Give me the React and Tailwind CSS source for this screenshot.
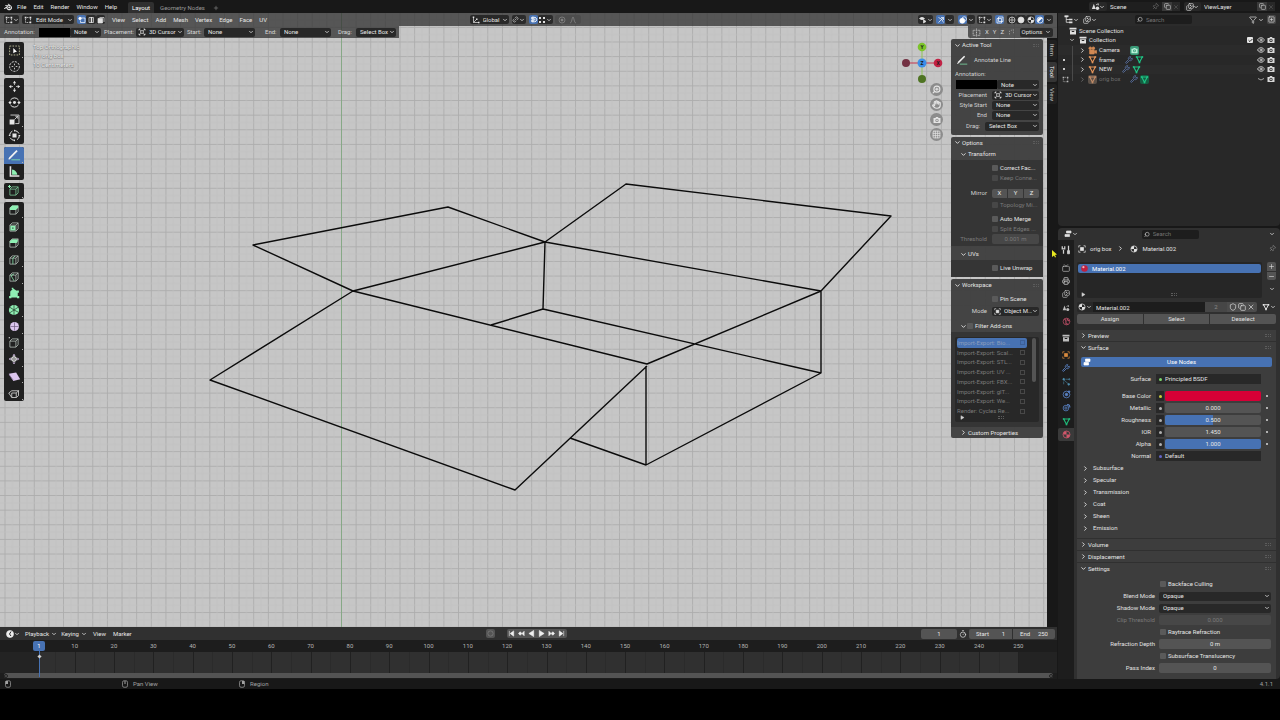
import React from 'react';
import clsx from 'clsx';
import { SiBlender } from 'react-icons/si';
import {
  Check, ChevronDown, ChevronRight, Copy, Eye, Funnel, Grid3x3, Hand, Images,
  Link2, Magnet, Minus, Pin, Plus, Printer, Search, Shield, SquarePlus, Timer, Tv, Wrench, X, ZoomIn,
} from 'lucide-react';

/* ---------- small shared icons ---------- */

const Svg = ({ size = 9, className, children }) => (
  <svg width={size} height={size} viewBox="0 0 16 16" fill="none" stroke="currentColor" strokeWidth="1.4" className={clsx('shrink-0', className)} aria-hidden="true">
    {children}
  </svg>
);

const Down = ({ className }) => <ChevronDown size={6} strokeWidth={3} className={clsx('shrink-0', className)} />;
const Right = ({ className }) => <ChevronRight size={7} strokeWidth={3} className={clsx('shrink-0', className)} />;

const MeshIcon = ({ className, size }) => (
  <Svg size={size} className={className}>
    <path d="M3 3.500h10L8 13z" strokeWidth="2" />
    <path d="M1.500 2h3v3h-3zM11.500 2h3v3h-3zM6.500 11.500h3v3h-3z" fill="currentColor" stroke="none" />
  </Svg>
);

const MaterialIcon = ({ className, size }) => (
  <Svg size={size} className={className}>
    <circle cx="8" cy="8" r="6.200" />
    <path d="M8 2a6 6 0 0 0-6 6h6zM8 8h6a6 6 0 0 1-6 6z" fill="currentColor" stroke="none" />
  </Svg>
);

const SceneIcon = ({ className, size }) => (
  <Svg size={size} className={className}>
    <path d="M5 3l3.500 9.500H1.500z" fill="currentColor" stroke="none" />
    <circle cx="11.500" cy="11" r="3" fill="currentColor" stroke="none" />
    <path d="M9 5l4-2v3" />
  </Svg>
);

const CollectionIcon = ({ className, size }) => (
  <Svg size={size} className={className}>
    <path d="M1 1.500h14v3.500H1z" fill="currentColor" stroke="none" />
    <path d="M2 6.500h12V15H2zM5.500 8v2h5V8z" fill="currentColor" fillRule="evenodd" stroke="none" />
  </Svg>
);

const CameraIcon = ({ className, size }) => (
  <Svg size={size} className={className}>
    <path d="M1 4h4l1-2h4l1 2h4v10H1zM8 5.500a3.300 3.300 0 1 0 0 6.600a3.300 3.300 0 1 0 0-6.600z" fill="currentColor" fillRule="evenodd" stroke="none" />
    <circle cx="8" cy="8.800" r="1.600" fill="currentColor" stroke="none" />
  </Svg>
);

const ObjectIcon = ({ className, size }) => (
  <Svg size={size} className={className}>
    <path d="M5 5h6v6H5z" fill="currentColor" />
    <path d="M1.500 5V1.500H5M11 1.500h3.500V5M14.500 11v3.500H11M5 14.500H1.500V11" />
  </Svg>
);

const EditIcon = ({ className, size }) => (
  <Svg size={size} className={className}>
    <path d="M3 6v7h8M13 5v5M6 3h4" strokeDasharray="3 1.500" />
    <path d="M1.500 1.500h3.500v3.500h-3.500zM11 1.500h3.500v3.500h-3.500zM11 11h3.500v3.500h-3.500z" fill="currentColor" stroke="none" />
  </Svg>
);

const CursorTargetIcon = ({ className, size }) => (
  <Svg size={size} className={className}>
    <circle cx="8" cy="8" r="3" />
    <path d="M2 2l3.500 3.500M14 2l-3.500 3.500M2 14l3.500-3.500M14 14l-3.500-3.500M2 2v3M2 2h3M14 2v3M14 2h-3M14 14v-3M14 14h-3M2 14v-3M2 14h3" />
  </Svg>
);

const AnnotateIcon = ({ size = 14 }) => (
  <Svg size={size}>
    <path d="M3 11.500L11.500 3" stroke="#f2f2f2" strokeWidth="2" />
    <path d="M2 13l1.500-2" stroke="#f2f2f2" />
    <path d="M5 13.500h10" stroke="#7fe0a8" strokeWidth="1" />
  </Svg>
);

/* ---------- form controls ---------- */

const Dropdown = ({ label, value, icon, className, inner = 'pl-[4px]' }) => (
  <span className={clsx('flex h-[9px] items-center rounded-xs bg-[#282828] pr-px text-[#e6e6e6]', className)}>
    {icon}
    <select aria-label={label} className={clsx('h-full min-w-0 flex-1 appearance-none bg-transparent outline-none', inner)}>
      <option>{value}</option>
    </select>
    <Down />
  </span>
);

const CheckBox = ({ label, dim, className }) => (
  <label className={clsx('flex items-center gap-[2px] whitespace-nowrap', dim ? 'text-[#7a7a7a]' : 'text-[#e6e6e6]', className)}>
    <input type="checkbox" disabled={dim} className={clsx('size-[6px] shrink-0 appearance-none rounded-[1px]', dim ? 'bg-[#474747]' : 'bg-[#5a5a5a]')} />
    {label}
  </label>
);

const NumberField = ({ label, value, fill = 0, dim }) => (
  <span className={clsx('grid h-[10px] min-w-0 flex-1 overflow-hidden rounded-xs', dim ? 'bg-[#474747] text-[#7a7a7a]' : 'bg-[#545454] text-[#e6e6e6]')}>
    <span className="col-start-1 row-start-1 bg-[#4772b3]" style={{ width: `${fill * 100}%` }} />
    <input aria-label={label} defaultValue={value} disabled={dim} className="col-start-1 row-start-1 w-full min-w-0 bg-transparent text-center outline-none" />
  </span>
);

const SearchBox = () => (
  <label className="flex h-[9px] w-[57px] items-center gap-[3px] rounded-xs bg-[#1d1d1d] pl-[2px]">
    <Search size={7} strokeWidth={2.5} className="-scale-x-100 text-[#cfcfcf]" />
    <input aria-label="Search" placeholder="Search" className="w-full min-w-0 bg-transparent outline-none placeholder:text-[#737373]" />
  </label>
);

const Grip = () => <span className="h-[3px] w-[6px] border-y border-dotted border-[#5c5c5c]" />;

/* ---------- top bar ---------- */

const DataSelector = ({ icon, name, pin }) => (
  <div className="flex h-[9px] w-[91px] items-center rounded-xs bg-[#1f1f1f]">
    <button aria-label={`Browse ${name}`} className="flex h-full items-center rounded-xs bg-[#282828] px-[2px] text-[#dcdcdc]">{icon}<Down className="-ml-px" /></button>
    <input aria-label="Name" defaultValue={name} className="w-0 flex-1 bg-transparent pl-[3px] text-[#e6e6e6] outline-none" />
    {pin && <Pin size={7} className="mr-[3px] rotate-45 text-[#777]" />}
    <button aria-label={`New ${name}`} className="flex h-full w-[10px] items-center justify-center bg-[#3a3a3a] text-[#d0d0d0]"><Copy size={7} /></button>
    <button aria-label={`Remove ${name}`} className="flex h-full w-[8px] items-center justify-center bg-[#282828] text-[#6b6b6b]"><X size={6} /></button>
  </div>
);

const TopBar = () => (
  <header className="flex h-[13px] items-center bg-[#181818] pr-[5px] text-[#e6e6e6]">
    <SiBlender size={8} className="ml-[4px]" />
    <nav className="ml-[5px] flex gap-[7px]">
      {['File', 'Edit', 'Render', 'Window', 'Help'].map((m) => <button key={m}>{m}</button>)}
    </nav>
    <nav className="ml-[11px] flex h-full items-end">
      <button className="h-[11px] rounded-t-xs bg-[#303030] px-[4px] text-white">Layout</button>
      <button className="h-[11px] px-[6px] text-[#989898]">Geometry Nodes</button>
      <button className="h-[11px] px-[2px] text-[#989898]" aria-label="Add workspace"><Plus size={6} /></button>
    </nav>
    <div className="ml-auto flex gap-[4px]">
      <DataSelector icon={<SceneIcon />} name="Scene" pin />
      <DataSelector icon={<Images size={8} />} name="ViewLayer" />
    </div>
  </header>
);

/* ---------- 3D viewport ---------- */

const WIRES = [
  'M253 245L448 207L545 242L353 291Z',
  'M545 242L626 184L891 216L821 291Z',
  'M545 242L543 309L821 373',
  'M543 309L491 325',
  'M353 291L647 364L821 291V373L646 465V366',
  'M646 465L570 438',
  'M353 291L210 380L515 490L647 366',
];

const Canvas = () => (
  <svg className="absolute inset-0 h-full w-full bg-[#c6c6c6]" aria-hidden="true">
    <defs>
      <pattern id="grid" width="14.63" height="14.63" patternUnits="userSpaceOnUse" x="341" y="41.5">
        <path d="M0.500 0V14.630M0 0.500H14.630" stroke="#acadac" strokeWidth="0.900" />
        <path d="M7.800 0V14.630M0 7.800H14.630" stroke="#c1c2c1" strokeWidth="0.700" />
      </pattern>
    </defs>
    <g transform="translate(0 -13)">
      <rect width="100%" height="200%" fill="url(#grid)" />
      <path d="M341.500 0V2000" stroke="#86a886" strokeWidth="1" />
      <path d={WIRES.join('')} fill="none" stroke="#0b0b0b" strokeWidth="1.400" strokeLinejoin="round" />
    </g>
  </svg>
);

const HeadButton = ({ label, on, className, children }) => (
  <button aria-label={label} className={clsx('flex h-[9px] items-center justify-center rounded-xs', on ? 'bg-[#4772b3] text-white' : 'bg-[#2b2b2b] text-[#e0e0e0]', className)}>
    {children}
  </button>
);

const ViewportHeader = () => (
  <div className="flex h-[13px] items-center bg-[#303030]/75 px-[4px] text-[#e8e8e8]">
    <HeadButton label="Editor type" className="w-[15px]"><EditIcon size={8} /><Down /></HeadButton>
    <Dropdown label="Mode" value="Edit Mode" icon={<EditIcon size={8} className="ml-[2px]" />} className="ml-[3px] w-[52px]" />
    <div className="ml-[3px] flex">
      <HeadButton label="Vertex select" on className="w-[9px]"><Svg size={8}><path d="M4 4h10v9H5V9" /><circle cx="4" cy="5" r="2.500" fill="white" /></Svg></HeadButton>
      <HeadButton label="Edge select" className="w-[10px]"><Svg size={8}><path d="M4 3h9v10H4z" /><path d="M9 2v12" strokeWidth="3" /></Svg></HeadButton>
      <HeadButton label="Face select" className="w-[9px]"><Svg size={8}><path d="M5 3h9v9" /><path d="M2 5h9v9H2z" fill="currentColor" /></Svg></HeadButton>
    </div>
    <nav className="ml-[7px] flex gap-[7px]">
      {['View', 'Select', 'Add', 'Mesh', 'Vertex', 'Edge', 'Face', 'UV'].map((m) => <button key={m}>{m}</button>)}
    </nav>
    <div className="grow-3" />
    <Dropdown label="Orientation" value="Global" inner="pl-[3px]" icon={<Svg size={8} className="ml-[2px]"><path d="M3 2v11h11M3 13l6-6" /><path d="M1.500 1h3v3h-3zM12 11.500h3v3h-3zM8 5h3v3H8z" fill="currentColor" stroke="none" /></Svg>} className="w-[39px]" />
    <HeadButton label="Pivot point" className="ml-[3px] w-[14px]"><Link2 size={7} className="-rotate-45" /><Down /></HeadButton>
    <HeadButton label="Snap" on className="ml-[3px] w-[9px]"><Magnet size={7} strokeWidth={3} className="rotate-45" /></HeadButton>
    <HeadButton label="Snap to" className="w-[15px]"><Svg size={8}><path d="M2 2h4v4H2zM10 2h4v4h-4zM2 10h4v4H2zM10 10h4v4h-4z" fill="currentColor" stroke="none" /></Svg><Down /></HeadButton>
    <div className="ml-[2px] flex h-[9px] w-[26px] items-center gap-[3px] rounded-xs bg-[#4d4d4d] px-[3px] text-[#8a8a8a]">
      <Svg size={8}><circle cx="8" cy="8" r="6" /><circle cx="8" cy="8" r="2" fill="currentColor" /></Svg>
      <Svg size={8}><path d="M2 14c4 0 4-12 6-12s2 12 6 12" /></Svg>
    </div>
    <div className="grow-5" />
    <HeadButton label="Visibility" className="w-[15px]"><Svg size={8}><path d="M1 5q5-5 10 0q-5 5-10 0z" fill="currentColor" /><path d="M9 7v7l5-3z" fill="currentColor" /></Svg><Down /></HeadButton>
    <HeadButton label="Gizmos" on className="ml-[3px] w-[9px]"><Svg size={8}><path d="M3 13L13 3M8 3h5v5M3 3q8 2 10 10" /></Svg></HeadButton>
    <HeadButton label="Gizmo options" className="w-[9px]"><Down /></HeadButton>
    <HeadButton label="Overlays" on className="ml-[4px] w-[9px]"><Svg size={8}><circle cx="6.500" cy="9.500" r="5" fill="white" /><circle cx="10.500" cy="6" r="4.500" /></Svg></HeadButton>
    <HeadButton label="Overlay options" className="w-[8px]"><Down /></HeadButton>
    <HeadButton label="Mesh edit mode" className="ml-[2px] w-[15px]"><EditIcon size={8} /><Down /></HeadButton>
    <HeadButton label="X-ray" on className="ml-[3px] w-[9px]"><Svg size={8}><path d="M2 5h9v9H2zM5 2h9v9H5z" /></Svg></HeadButton>
    <div className="ml-[3px] flex">
      <HeadButton label="Wireframe" className="w-[9px]"><Svg size={8}><circle cx="8" cy="8" r="6" /><path d="M2 8h12M8 2v12" /></Svg></HeadButton>
      <HeadButton label="Solid" className="w-[10px]"><Svg size={8}><circle cx="8" cy="8" r="6" fill="currentColor" /></Svg></HeadButton>
      <HeadButton label="Material preview" className="w-[9px]"><MaterialIcon size={8} /></HeadButton>
      <HeadButton label="Rendered" on className="w-[9px]"><Svg size={8}><circle cx="8" cy="8" r="6" /><path d="M4 12a6 6 0 0 1 8-8z" fill="currentColor" /></Svg></HeadButton>
      <HeadButton label="Shading options" className="w-[9px]"><Down /></HeadButton>
    </div>
  </div>
);

const ToolSettings = () => (
  <div className="flex items-start justify-between text-[#d6d6d6]">
    <div className="flex h-[12px] items-center bg-[#303030]/75 pr-[3px] pl-[4px]">
      <span className="w-[35px]">Annotation:</span>
      <span className="h-[9px] w-[31px] bg-black" />
      <Dropdown label="Annotation layer" value="Note" className="w-[31px]" />
      <span className="ml-[3px] w-[32px]">Placement:</span>
      <Dropdown label="Annotation placement" value="3D Cursor" icon={<CursorTargetIcon size={8} className="ml-[2px]" />} inner="pl-[3px]" className="w-[48px]" />
      <span className="ml-[3px] w-[17px]">Start:</span>
      <Dropdown label="Start" value="None" className="w-[51px]" />
      <span className="ml-[10px] w-[15px]">End:</span>
      <Dropdown label="End" value="None" className="w-[51px]" />
      <span className="ml-[7px] w-[18px]">Drag:</span>
      <Dropdown label="Drag action" value="Select Box" className="w-[40px]" />
    </div>
    <div className="flex h-[12px] items-center gap-[4px] rounded-bl-xs bg-[#303030]/75 pr-[4px] pl-[4px]">
      <Svg size={9}><path d="M8 1v14M6 4H2v9h4M10 4h4v9h-4" strokeDasharray="2 1" /></Svg>
      <button>X</button>
      <button>Y</button>
      <button>Z</button>
      <Svg size={8} className="opacity-60"><path d="M3 13V6l8-3v8" strokeDasharray="3 2" /></Svg>
      <HeadButton label="Options menu" className="w-[33px] gap-[3px]">Options<Down /></HeadButton>
    </div>
  </div>
);

const Cube = ({ children, className }) => (
  <Svg size={12} className={className || 'text-[#b9c4bd]'}>
    <path d="M2.500 5.500h8v8h-8zM2.500 5.500l3-3h8l-3 3M13.500 2.500v8l-3 3" strokeWidth="1" />
    {children}
  </Svg>
);

const G = '#8ff0b4';
const P = '#dcc6ee';

const TOOL_GROUPS = [
  {
    size: 'h-[33px]',
    tools: [
      ['Select Box', <Svg size={13}><path d="M2 2.500h12v11H2z" strokeDasharray="2 1.500" stroke="#cfcfa8" strokeWidth="1" /><path d="M6.500 5v6.500l2-1.500 2.500-.5z" fill="white" stroke="none" /></Svg>, true],
      ['Cursor', <Svg size={13}><circle cx="8" cy="8" r="6" strokeDasharray="2.500 1.500" strokeWidth="1.200" /><path d="M8 4.500v2M8 9.500v2M4.500 8h2M9.500 8h2" strokeWidth="1" /></Svg>],
    ],
  },
  {
    size: 'h-[66px]',
    tools: [
      ['Move', <Svg size={13}><path d="M8 1l2 3H6zM8 15l2-3H6zM1 8l3-2v4zM15 8l-3-2v4z" fill="currentColor" stroke="none" /><path d="M8 4v2M8 10v2M4 8h2M10 8h2" strokeWidth="1" /></Svg>],
      ['Rotate', <Svg size={13}><path d="M3 5a6 6 0 0 1 10 0M3 11a6 6 0 0 0 10 0" strokeWidth="1.200" /><circle cx="8" cy="8" r="1.800" fill="currentColor" stroke="none" /><path d="M0.500 8l2-2 2 2-2 2zM11.500 8l2-2 2 2-2 2z" fill="currentColor" stroke="none" /></Svg>],
      ['Scale', <Svg size={13}><path d="M3 2.500h10.500V13H9" strokeWidth="1" /><path d="M2 8h6v6H2z" fill="currentColor" stroke="none" /><path d="M8 8l4-4M9 4h3v3" strokeWidth="1" /></Svg>, true],
      ['Transform', <Svg size={13}><circle cx="8" cy="8" r="6" strokeDasharray="6 3.400" strokeWidth="1.200" /><path d="M5.500 5.500h5v5h-5z" fill="currentColor" stroke="none" /><path d="M8 1v2M8 13v2M1 8h2M13 8h2" strokeWidth="1.200" /></Svg>],
    ],
  },
  {
    size: 'h-[33px]',
    tools: [
      ['Annotate', <AnnotateIcon />, true, true],
      ['Measure', <Svg size={13}><path d="M3 1.500v12h11" strokeWidth="2" /><path d="M5 5.500a8 8 0 0 1 6.500 6.500H5z" fill={G} stroke="none" /></Svg>],
    ],
  },
  { size: 'h-[16px]', tools: [['Add Cube', <Cube className="text-[#7fcf9d]"><path d="M2 0v4M0 2h4" stroke={G} /></Cube>, true]] },
  {
    size: 'h-[199px]',
    tools: [
      ['Extrude Region', <Cube><path d="M2.500 8V5l3-3h8v3l-3 3z" fill={G} stroke="none" /></Cube>, true],
      ['Inset Faces', <Cube><path d="M4.500 7.500h4v4h-4z" stroke={G} strokeWidth="2.600" /></Cube>],
      ['Bevel', <Cube><path d="M2.500 8V6l3-3h6l2 2-2 3z" fill={G} stroke="none" /></Cube>],
      ['Loop Cut', <Cube><path d="M6.500 13.500v-8l3-3" stroke={G} strokeWidth="1" /></Cube>, true],
      ['Knife', <Cube><path d="M4 6l4 7M8 4L4 6" stroke={G} strokeWidth="1" /></Cube>, true],
      ['Poly Build', <Svg size={12}><path d="M3 6l4-4 6 4v8H3z" fill={G} stroke="none" /><path d="M1.500 12h3v3h-3zM12 12h3v3h-3zM11.500 4.500h3v3h-3zM5 1h2v2H5z" fill={G} stroke="none" /></Svg>],
      ['Spin', <Svg size={12}><circle cx="8" cy="8" r="6.800" fill={G} stroke="none" /><path d="M8 8V1M8 8l6-4M8 8l6 3M8 8v7M8 8l-6 4M8 8L2 4" stroke="#28402f" strokeWidth="1" /></Svg>, true],
      ['Smooth', <Svg size={11}><circle cx="8" cy="8" r="6.500" fill={P} stroke="none" /><path d="M2 8h12M8 2v12" stroke="#6d5a7d" strokeWidth="1" /></Svg>, true],
      ['Edge Slide', <Cube><path d="M1 1h1.500" stroke="white" /></Cube>, true],
      ['Shrink/Fatten', <Svg size={12}><path d="M8 1l2 2.500H6zM8 15l2-2.500H6zM1 8l2.500-2v4zM15 8l-2.500-2v4z" fill={P} stroke="none" /><circle cx="8" cy="8" r="3" /><path d="M8 4v8M4 8h8" strokeWidth="1" /></Svg>, true],
      ['Shear', <Svg size={13}><path d="M1 4.500L10 3l5 8.500-8.500 2z" fill={P} stroke="none" /><path d="M1.500 6l5 6.500" stroke="#8e76a3" strokeWidth="1" /></Svg>, true],
      ['Rip Region', <Svg size={12}><path d="M1 8l4-3h9l-3 3v6H5zM14 4.500v7l-3 2.500M5 14V8h6" strokeWidth="1" /></Svg>, true],
    ],
  },
];

const Toolbar = () => (
  <div className="mt-[4px] ml-[4px] flex w-[20px] flex-col gap-[3px] text-[#e6e6e6]">
    {TOOL_GROUPS.map((group, i) => (
      <div key={i} className={clsx('flex shrink-0 flex-col overflow-hidden rounded-xs bg-[#202020]', group.size)}>
        {group.tools.map(([name, icon, more, active]) => (
          <button key={name} aria-label={name} className={clsx('relative flex min-h-0 flex-1 items-center justify-center', active && 'bg-[#4772b3]')}>
            {icon}
            {more && <span className="absolute right-px bottom-px size-px bg-[#b0b0b0]" />}
          </button>
        ))}
      </div>
    ))}
  </div>
);

const Gizmo = () => (
  <svg width="42" height="44" viewBox="0 0 42 44" className="block">
    <path d="M5 22h32" stroke="#c4354f" strokeWidth="1" />
    <path d="M21 6v32" stroke="#8fc45a" strokeWidth="1" />
    <circle cx="21" cy="6" r="4.300" fill="#7cc32a" />
    <circle cx="21" cy="38" r="4" fill="#4f7423" />
    <circle cx="5" cy="22" r="4" fill="#733243" />
    <circle cx="37" cy="22" r="4.300" fill="#c22245" />
    <circle cx="21" cy="22" r="4.500" fill="#3b8fe8" />
    <g fill="#1a1a1a" fontSize="5" fontWeight="bold" textAnchor="middle">
      <text x="21" y="8">Y</text>
      <text x="21" y="24">Z</text>
      <text x="37" y="24">X</text>
    </g>
  </svg>
);

const NAV_BUTTONS = [
  ['Zoom', <ZoomIn size={9} strokeWidth={3} className="-scale-x-100" />],
  ['Pan', <Hand size={9} strokeWidth={3} />],
  ['Camera view', <CameraIcon size={8} />],
  ['Orthographic', <Grid3x3 size={9} strokeWidth={2} />],
];

/* ---------- sidebar panels inside the viewport ---------- */

const PanelTitle = ({ title, closed, sub, height = 'h-[12px]', className, children }) => (
  <div className={clsx('flex items-center text-[#e6e6e6]', height, sub ? 'pl-[9px]' : 'pl-[3px]', className)}>
    {closed ? <Right /> : <ChevronDown size={7} strokeWidth={3} className="shrink-0" />}
    {children}
    <span className="ml-px grow">{title}</span>
    {!sub && <Grip />}
  </div>
);

const SideRow = ({ label, wide, className, children }) => (
  <div className={clsx('flex h-[10px] items-center gap-[5px]', className)}>
    <span className={clsx('shrink-0 text-right text-[#d0d0d0]', wide ? 'w-[29px]' : 'w-[36px]')}>{label}</span>
    {children}
  </div>
);

const ActiveToolPanel = () => (
  <section className="rounded-xs bg-[#3d3d3d]/95 pr-[4px] pb-[4px]">
    <PanelTitle title="Active Tool" />
    <div className="mt-[2px] flex h-[14px] items-center gap-[6px] pl-[5px] text-[#d0d0d0]"><AnnotateIcon size={12} />Annotate Line</div>
    <div className="mt-[2px] h-[10px] pl-[4px] leading-[10px] text-[#d0d0d0]">Annotation:</div>
    <div className="flex h-[11px] items-center pl-[5px]">
      <span className="h-[9px] w-[41px] bg-black" />
      <Dropdown label="Layer" value="Note" className="flex-1" />
    </div>
    <SideRow label="Placement"><Dropdown label="Placement" value="3D Cursor" icon={<CursorTargetIcon size={8} className="ml-[2px]" />} inner="pl-[3px]" className="min-w-0 flex-1" /></SideRow>
    <SideRow label="Style Start"><Dropdown label="Style Start" value="None" className="min-w-0 flex-1" /></SideRow>
    <SideRow label="End"><Dropdown label="Style End" value="None" className="min-w-0 flex-1" /></SideRow>
    <SideRow label="Drag:" wide className="mt-px"><Dropdown label="Drag" value="Select Box" className="min-w-0 flex-1" /></SideRow>
  </section>
);

const OptionsPanel = () => (
  <section className="rounded-xs bg-[#3d3d3d]/95">
    <PanelTitle title="Options" height="h-[11px]" className="pr-[4px]" />
    <PanelTitle title="Transform" sub />
    <div className="bg-[#353535] py-[2px] pr-[4px]">
      <CheckBox label="Correct Fac..." className="mt-px ml-[41px] h-[10px]" />
      <CheckBox label="Keep Conne..." dim className="ml-[41px] h-[10px]" />
      <div className="mt-[5px] flex h-[10px] items-center gap-[5px]">
        <span className="w-[36px] text-right text-[#d0d0d0]">Mirror</span>
        <div className="flex h-[9px] flex-1 gap-px overflow-hidden rounded-xs text-[#e6e6e6]">
          {['X', 'Y', 'Z'].map((axis) => <button key={axis} className="flex-1 bg-[#545454]">{axis}</button>)}
        </div>
      </div>
      <CheckBox label="Topology Mi..." dim className="mt-[2px] ml-[41px] h-[10px]" />
      <CheckBox label="Auto Merge" className="mt-[4px] ml-[41px] h-[10px]" />
      <CheckBox label="Split Edges ..." dim className="ml-[41px] h-[10px]" />
      <div className="flex h-[10px] items-center gap-[5px]">
        <span className="w-[36px] text-right text-[#7a7a7a]">Threshold</span>
        <NumberField label="Threshold" value="0.001 m" dim />
      </div>
    </div>
    <PanelTitle title="UVs" sub className="mt-[2px]" />
    <div className="bg-[#353535] pt-[3px] pb-[4px]">
      <CheckBox label="Live Unwrap" className="ml-[41px] h-[10px]" />
    </div>
  </section>
);

const ADDONS = [
  'Import-Export: Bio...', 'Import-Export: Scal...', 'Import-Export: STL...', 'Import-Export: UV ...',
  'Import-Export: FBX...', 'Import-Export: glT...', 'Import-Export: We...', 'Render: Cycles Re...',
];

const WorkspacePanel = () => (
  <section className="rounded-xs bg-[#3d3d3d]/95">
    <PanelTitle title="Workspace" className="pr-[4px]" />
    <div className="pr-[4px]">
      <CheckBox label="Pin Scene" className="mt-[3px] ml-[41px] h-[10px]" />
      <div className="mt-[2px]">
        <SideRow label="Mode"><Dropdown label="Workspace mode" value="Object M..." icon={<ObjectIcon size={7} className="ml-[2px]" />} inner="pl-[3px]" className="min-w-0 flex-1" /></SideRow>
      </div>
    </div>
    <PanelTitle title="Filter Add-ons" sub className="mt-[4px]">
      <input type="checkbox" aria-label="Filter Add-ons" className="mr-px size-[6px] appearance-none rounded-[1px] bg-[#5a5a5a]" />
    </PanelTitle>
    <div className="bg-[#353535] px-[4px] pt-[5px] pb-[5px]">
      <div className="flex h-[85px] flex-col rounded-xs bg-[#282828] p-px text-[#7a7a7a]">
        <div className="flex min-h-0 flex-1 justify-between">
          <ul className="ml-px flex h-[78px] w-[70px] flex-col">
            {ADDONS.map((name, i) => (
              <li key={name} className={clsx('flex min-h-0 flex-1 items-center justify-between whitespace-nowrap pr-[2px]', i === 0 && 'rounded-xs bg-[#4772b3] text-[#8c9dbb]')}>
                {name}
                <input type="checkbox" disabled aria-label={name} className={clsx('size-[5px] appearance-none border', i === 0 ? 'border-[#3d619a]' : 'border-[#484848]')} />
              </li>
            ))}
          </ul>
          <span className="mr-[2px] h-[44px] w-[4px] rounded-full bg-[#545454]" />
        </div>
        <div className="flex h-[7px] items-center pr-[34px] pl-[4px]">
          <Svg size={5} className="text-[#d0d0d0]"><path d="M3 2l10 6-10 6z" fill="currentColor" /></Svg>
          <span className="grow" />
          <Grip />
        </div>
      </div>
    </div>
    <PanelTitle title="Custom Properties" sub closed height="h-[11px]" />
  </section>
);

const Viewport = () => (
  <section className="relative flex flex-1 flex-col">
    <Canvas />
    <div className="relative flex flex-1 flex-col">
      <ViewportHeader />
      <ToolSettings />
      <div className="flex flex-1">
        <Toolbar />
        <div className="mt-[4px] ml-[9px] leading-[9px] text-[#f2f2f2] [text-shadow:0_0_1px_#555,0_1px_1px_#888]">
          <p>Top Orthographic</p>
          <p>(1) orig box</p>
          <p>10 Centimeters</p>
        </div>
        <div className="mt-[3px] mr-[8px] ml-auto flex w-[42px] flex-col items-end">
          <Gizmo />
          <div className="mt-[-2px] flex flex-col gap-[2px]">
            {NAV_BUTTONS.map(([name, icon]) => (
              <button key={name} aria-label={name} className="flex size-[13px] items-center justify-center rounded-full bg-[#8c8c8c] text-[#e4e4e4]">{icon}</button>
            ))}
          </div>
        </div>
        <div className="mt-px mr-[4px] flex w-[92px] flex-col gap-[2px]">
          <ActiveToolPanel />
          <OptionsPanel />
          <WorkspacePanel />
        </div>
        <nav className="flex w-[10px] flex-col gap-[2px] bg-[#181818] pt-[2px] text-[#c6c6c6]">
          {['Item', 'Tool', 'View'].map((tab) => (
            <button key={tab} className={clsx('flex h-[20px] items-center justify-center rounded-r-xs [writing-mode:vertical-rl]', tab === 'Tool' ? 'bg-[#353535] text-white' : 'bg-[#202020]')}>{tab}</button>
          ))}
        </nav>
      </div>
    </div>
    {/* mouse pointer */}
    <svg width="5" height="8" viewBox="0 0 5 8" className="absolute top-[237px] right-0"><path d="M0 0v7l2-1.500 1 2 1-.5-1-2 2-.5z" fill="#e8e820" /></svg>
  </section>
);

/* ---------- timeline ---------- */

const FRAMES = Array.from({ length: 25 }, (_, i) => (i + 1) * 10);

const PLAYBACK = [
  ['Jump to start', 'M3 2v12M13 2v12L5 8z'],
  ['Previous keyframe', 'M1 8l4-4 4 4-4 4zM14 3v10L9 8z'],
  ['Play reverse', 'M13 1v14L2 8z'],
  ['Play', 'M3 1v14l11-7z'],
  ['Next keyframe', 'M15 8l-4-4-4 4 4 4zM2 3v10l5-5z'],
  ['Jump to end', 'M13 2v12M3 2v12l8-6z'],
];

const Timeline = () => (
  <section className="relative bg-[#1d1d1d] text-[#e6e6e6]">
    <div className="flex h-[13px] items-center justify-between bg-[#303030] pr-[2px] pl-[6px]">
      <div className="flex items-center">
        <button aria-label="Timeline editor" className="flex items-center"><Svg size={8}><circle cx="8" cy="8" r="7" fill="#eee" /><path d="M10 3L7 8l3 4" stroke="#222" strokeWidth="2" /></Svg><Down /></button>
        <button className="ml-[5px] flex items-center gap-[2px]">Playback<Down /></button>
        <button className="ml-[4px] flex items-center gap-[2px]">Keying<Down /></button>
        <button className="ml-[6px]">View</button>
        <button className="ml-[7px]">Marker</button>
      </div>
      <div className="flex items-center">
        <button aria-label="Auto keying" className="flex size-[9px] items-center justify-center rounded-xs bg-[#545454] text-[#888]"><Svg size={7}><circle cx="8" cy="8" r="6" /></Svg></button>
        <div className="ml-[12px] flex h-[9px] overflow-hidden rounded-xs bg-[#545454]">
          {PLAYBACK.map(([name, d]) => (
            <button key={name} aria-label={name} className="flex w-[10px] items-center justify-center text-[#f0f0f0]"><Svg size={7}><path d={d} fill="currentColor" /></Svg></button>
          ))}
        </div>
      </div>
      <div className="flex h-[10px] items-center">
        <span className="flex w-[36px]"><NumberField label="Current frame" value="1" /></span>
        <Timer size={8} className="mx-[2px]" />
        <label className="flex h-full w-[43px] items-center rounded-l-xs bg-[#545454] px-[7px]">Start<input defaultValue="1" className="w-0 flex-1 bg-transparent text-right outline-none" /></label>
        <label className="ml-px flex h-full w-[42px] items-center rounded-r-xs bg-[#545454] px-[7px]">End<input defaultValue="250" className="w-0 flex-1 bg-transparent text-right outline-none" /></label>
      </div>
    </div>
    <div className="mr-[19px] ml-[55px] grid h-[12px] grid-cols-25 items-center text-center text-[#b4b4b4]">
      {FRAMES.map((f) => <span key={f}>{f}</span>)}
    </div>
    <div className="grid h-[21px] bg-[#232323]">
      <div className="col-start-1 row-start-1 mr-[39px] ml-[39px] bg-[#303030]" />
      <div className="col-start-1 row-start-1 mr-[19px] ml-[55px] grid grid-cols-25">
        {FRAMES.map((f) => (
          <div key={f} className="flex border-l border-[#2b2b2b]"><span className="flex-1" /><span className="w-px bg-[#212121]" /><span className="flex-1" /></div>
        ))}
      </div>
    </div>
    <div className="mx-[4px] mb-px flex h-[5px] items-center justify-between rounded-full bg-[#545454]">
      <span className="size-[4px] rounded-full border border-[#222]" />
      <span className="size-[4px] rounded-full border border-[#222]" />
    </div>
    {/* playhead */}
    <div className="absolute top-[14px] left-[33px] flex w-[12px] flex-col items-center">
      <span className="flex h-[10px] w-full items-center justify-center rounded-xs bg-[#4772b3] text-white">1</span>
      <span className="h-[26px] w-px bg-[#4772b3]" />
    </div>
    <span className="absolute top-[28px] left-[38px] size-[3px] rotate-45 bg-[#cfcfcf]" />
  </section>
);

/* ---------- outliner ---------- */

const OBJECTS = [
  { name: 'Camera', color: 'text-[#d28a54]', camera: true },
  { name: 'frame', color: 'text-[#e0935a]', dot: true },
  { name: 'NEW', color: 'text-[#e0935a]', dot: true },
  { name: 'orig box', color: 'text-[#c08a66]', editing: true },
];

const Toggles = ({ check, closed }) => (
  <span className="flex items-center gap-[2px] pr-[5px] text-[#d8d8d8]">
    {check && (
      <label className="mr-[2px] flex size-[6px] items-center justify-center rounded-[1px] bg-[#e6e6e6] text-black">
        <input type="checkbox" defaultChecked aria-label="Exclude from view layer" className="sr-only" />
        <Check size={5} strokeWidth={4} />
      </label>
    )}
    {closed ? <Svg size={8}><path d="M2 7q6 6 12 0" /></Svg> : <Eye size={8} strokeWidth={2.5} />}
    <CameraIcon size={8} />
  </span>
);

const Outliner = () => (
  <section className="h-[213px] rounded-sm bg-[#282828] text-[#e0e0e0]">
    <div className="flex h-[13px] items-center bg-[#2b2b2b] pr-[4px] pl-[6px]">
      <button aria-label="Outliner editor" className="flex items-center"><Svg size={9}><path d="M1 2h8M4 3v10h5M4 8h5" /><path d="M9 6.500h6v3H9zM9 11.500h6v3H9zM1 1h6v3H1z" fill="currentColor" stroke="none" /></Svg><Down /></button>
      <button aria-label="Display mode" className="ml-[4px] flex items-center"><Images size={8} /><Down /></button>
      <span className="grow-6" />
      <SearchBox />
      <span className="grow-9" />
      <button aria-label="Filter" className="flex items-center gap-px"><Funnel size={8} /><Down /></button>
      <button aria-label="New collection" className="ml-[3px] flex size-[9px] items-center justify-center rounded-xs bg-[#4a4a4a]"><SquarePlus size={7} /></button>
    </div>
    <div className="relative grid h-[58px] grid-rows-6">
      <div className="flex items-center gap-[2px] pl-[11px]"><CollectionIcon size={8} />Scene Collection</div>
      <div className="flex items-center pl-[11px]">
        <Down />
        <CollectionIcon size={8} className="mr-[2px] ml-[4px]" />
        Collection
        <span className="grow" />
        <Toggles check />
      </div>
      {OBJECTS.map((o, i) => (
        <div key={o.name} className={clsx('flex items-center pl-[2px]', i % 2 === 0 && 'bg-[#2b2b2b]', o.editing && 'text-[#6d6d6d]')}>
          <span className="flex w-[19px] items-center pl-[2px]">
            {o.dot && <span className="ml-px size-[2px] rounded-full bg-white" />}
            {o.editing && <EditIcon size={7} className="text-[#bbb]" />}
          </span>
          <Right />
          <span className={clsx('mr-[2px] ml-[2px] flex size-[9px] items-center justify-center rounded-xs', o.color, o.editing && 'bg-[#5a5048]')}>
            {o.camera ? <Svg><path d="M3 7h8v7H3zM12 9l3-1v5l-3-1z" fill="currentColor" /><circle cx="4" cy="4" r="2.300" fill="currentColor" /><circle cx="9.500" cy="4" r="2.300" fill="currentColor" /></Svg> : <MeshIcon />}
          </span>
          {o.name}
          {o.camera ? (
            <span className="ml-[10px] flex size-[9px] items-center justify-center rounded-xs bg-[#3a9a78] text-[#b8f0d8]"><CameraIcon size={7} /></span>
          ) : (
            <>
              <Wrench size={8} className="mr-[2px] ml-[10px] text-[#6583bf]" />
              <span className={clsx('flex size-[9px] items-center justify-center rounded-xs text-[#1fc284]', o.editing && 'bg-[#155e42]')}><MeshIcon /></span>
            </>
          )}
          <span className="grow" />
          <Toggles closed={o.editing} />
        </div>
      ))}
      <span className="absolute top-[20px] left-[14px] h-[35px] w-px bg-[#4a4a4a]" />
    </div>
  </section>
);

/* ---------- properties editor ---------- */

const TOP_TABS = [
  ['Render', <Tv size={8} />, 'text-[#bdbdbd]'],
  ['Output', <Printer size={8} strokeWidth={2.5} />, 'text-[#bdbdbd]'],
  ['View layer', <Images size={8} />, 'text-[#bdbdbd]'],
  ['Scene', <SceneIcon size={8} />, 'text-[#bdbdbd]'],
  ['World', <Svg size={9}><circle cx="8" cy="8" r="6" /><path d="M4 4q4 1 3 5t4 4M9 2q0 4 5 5" strokeWidth="2" /></Svg>, 'text-[#b04a60]'],
];

const OBJECT_TABS = [
  ['Object', <ObjectIcon size={8} />, 'text-[#d88a3e]'],
  ['Modifiers', <Wrench size={8} strokeWidth={2.5} />, 'text-[#5b85c9]'],
  ['Particles', <Svg size={9}><path d="M3 2v3M3 5l8 7M6 4h7M3 8v5" strokeWidth="1" /><circle cx="3" cy="4" r="1.500" fill="currentColor" /><circle cx="12" cy="13" r="1.500" fill="currentColor" /><circle cx="13" cy="4" r="1" /></Svg>, 'text-[#4f8fae]'],
  ['Physics', <Svg size={9}><circle cx="8" cy="8" r="6" /><circle cx="8" cy="8" r="2.200" fill="currentColor" /><circle cx="12.500" cy="3" r="1.500" fill="currentColor" /></Svg>, 'text-[#5b85c9]'],
  ['Constraints', <Svg size={9}><circle cx="7" cy="9" r="5" /><circle cx="7" cy="9" r="2" /><path d="M9 3q5-1 5 5" strokeWidth="2" /></Svg>, 'text-[#5b85c9]'],
  ['Data', <MeshIcon />, 'text-[#1fb878]'],
  ['Material', <MaterialIcon />, 'text-[#d0566a]'],
];

const TabButton = ({ tab: [name, icon, color] }) => (
  <button aria-label={name} className={clsx('flex min-h-0 items-center justify-center rounded-l-xs', color, name === 'Material' && 'bg-[#3a3a3a]')}>{icon}</button>
);

const PropTabs = () => (
  <nav className="flex w-[16px] flex-col bg-[#1d1d1d]">
    <button aria-label="Tool" className="mt-[3px] flex h-[14px] items-center justify-center text-[#cfcfcf]">
      <Svg size={10}><path d="M4 8v6M2 2v4h4V2M12 1v8" strokeWidth="2" /><path d="M10.500 9h3v5h-3z" fill="currentColor" /></Svg>
    </button>
    <div className="mt-[4px] grid h-[67px] grid-rows-5">{TOP_TABS.map((t) => <TabButton key={t[0]} tab={t} />)}</div>
    <button aria-label="Collection" className="mt-[3px] flex h-[13px] items-center justify-center text-[#bdbdbd]"><CollectionIcon size={8} /></button>
    <div className="mt-[4px] grid h-[93px] grid-rows-7">{OBJECT_TABS.map((t) => <TabButton key={t[0]} tab={t} />)}</div>
  </nav>
);

const PropPanel = ({ title, open, children }) => (
  <section className="bg-[#3d3d3d]">
    <PanelTitle title={title} closed={!open} height="h-[11px]" className="pr-[5px]" />
    {children}
  </section>
);

const SURFACE = [
  { label: 'Metallic', value: '0.000', fill: 0 },
  { label: 'Roughness', value: '0.500', fill: 0.5 },
  { label: 'IOR', value: '1.450', fill: 0 },
  { label: 'Alpha', value: '1.000', fill: 1 },
];

const Socket = ({ color, className }) => (
  <span className={clsx('flex h-[10px] w-[8px] shrink-0 items-center justify-center bg-[#282828]', className)}><span className={clsx('size-[3px] rounded-full', color)} /></span>
);

const SurfaceRow = ({ label, dot, children }) => (
  <div className="flex h-[12px] items-center">
    <span className="mr-[5px] w-[74px] shrink-0 text-right">{label}</span>
    {children}
    <span className="w-[15px] shrink-0 pl-[5px]">{dot && <span className="block size-[2px] rounded-full bg-[#d8d8d8]" />}</span>
  </div>
);

const SettingRow = ({ label, dim, children }) => (
  <div className="flex h-[12px] items-center pr-[5px]">
    <span className={clsx('mr-[4px] w-[78px] shrink-0 text-right', dim && 'text-[#7a7a7a]')}>{label}</span>
    {children}
  </div>
);

const MaterialSlots = () => (
  <>
    <div className="mt-[5px] flex gap-[5px]">
      <div className="flex h-[36px] flex-1 flex-col justify-between rounded-xs bg-[#262626] px-px pt-[2px] pb-px">
        <div className="flex h-[9px] items-center gap-[4px] rounded-xs bg-[#4772b3] pl-[3px] text-white">
          <Svg size={7}><circle cx="8" cy="8" r="7.500" fill="#c02040" stroke="none" /><circle cx="5.500" cy="5" r="2.500" fill="#f3b0b8" stroke="none" /></Svg>
          Material.002
        </div>
        <div className="flex items-center pl-[3px]">
          <Svg size={5} className="text-[#d0d0d0]"><path d="M3 2l10 6-10 6z" fill="currentColor" /></Svg>
          <span className="flex grow justify-center"><Grip /></span>
        </div>
      </div>
      <div className="flex w-[9px] flex-col items-center">
        <button aria-label="Add slot" className="flex h-[9px] w-full items-center justify-center rounded-t-xs bg-[#545454]"><Plus size={7} /></button>
        <button aria-label="Remove slot" className="mt-px flex h-[8px] w-full items-center justify-center rounded-b-xs bg-[#545454]"><Minus size={7} /></button>
        <button aria-label="Slot options" className="mt-[6px]"><Down /></button>
      </div>
    </div>
    <div className="mt-[4px] flex h-[10px] items-center">
      <button aria-label="Browse material" className="flex h-full items-center rounded-l-xs bg-[#282828] px-px"><MaterialIcon size={8} /><Down /></button>
      <input aria-label="Material name" defaultValue="Material.002" className="h-full w-0 flex-1 bg-[#1d1d1d] pl-[3px] outline-none" />
      <button className="h-full w-[22px] bg-[#464646] text-[#8a8a8a]">2</button>
      <span className="flex h-full w-[30px] items-center justify-around rounded-r-xs bg-[#4c4c4c] px-px">
        <button aria-label="Fake user"><Shield size={8} /></button>
        <button aria-label="Duplicate material"><Copy size={8} /></button>
        <button aria-label="Unlink material"><X size={8} /></button>
      </span>
      <button aria-label="Link" className="ml-[5px] flex items-center"><MeshIcon size={8} /><Down /></button>
    </div>
    <div className="mt-[2px] flex h-[10px] gap-px overflow-hidden rounded-xs">
      {['Assign', 'Select', 'Deselect'].map((b) => <button key={b} className="flex-1 bg-[#545454]">{b}</button>)}
    </div>
  </>
);

const Properties = () => (
  <section className="flex flex-1 flex-col rounded-sm bg-[#303030] text-[#e2e2e2]">
    <div className="flex h-[12px] items-center pr-[5px] pl-[6px]">
      <button aria-label="Properties editor" className="flex items-center"><Svg size={8}><path d="M5 2h9v4H5zM2 9h9v4H2z" fill="currentColor" /></Svg><Down /></button>
      <span className="grow-10" />
      <SearchBox />
      <span className="grow-11" />
      <Down />
    </div>
    <div className="flex flex-1">
      <PropTabs />
      <div className="flex-1 pr-[4px] pl-[3px]">
        <div className="flex h-[17px] items-center">
          <ObjectIcon size={8} className="ml-px" />
          <span className="ml-[4px]">orig box</span>
          <Right className="mx-[6px]" />
          <MaterialIcon size={8} />
          <span className="ml-[4px] grow">Material.002</span>
          <Pin size={7} className="rotate-45 text-[#909090]" />
        </div>
        <MaterialSlots />
        <div className="mt-[6px] flex flex-col gap-px">
          <PropPanel title="Preview" />
          <PropPanel title="Surface" open>
            <div className="px-[4px] pt-[4px]">
              <button className="flex h-[10px] w-full items-center rounded-xs bg-[#4772b3] pl-[2px] text-white">
                <Svg size={8}><path d="M5 2h9v5H5zM2 9h9v5H2z" fill="currentColor" /></Svg>
                <span className="flex-1">Use Nodes</span>
              </button>
            </div>
            <div className="pt-[6px] pb-[4px]">
              <SurfaceRow label="Surface">
                <Socket color="bg-[#7ad86a]" />
                <button className="h-[10px] flex-1 bg-[#282828] pl-px text-left">Principled BSDF</button>
              </SurfaceRow>
              <div className="mt-[5px]">
                <SurfaceRow label="Base Color" dot>
                  <Socket color="bg-[#c8c83c]" className="mr-px" />
                  <button aria-label="Base Color" className="h-[10px] flex-1 rounded-xs bg-[#d60036]" />
                </SurfaceRow>
              </div>
              {SURFACE.map((row) => (
                <SurfaceRow key={row.label} label={row.label} dot>
                  <Socket color="bg-[#b0b0b0]" className="mr-px" />
                  <NumberField {...row} />
                </SurfaceRow>
              ))}
              <SurfaceRow label="Normal">
                <Socket color="bg-[#6464c8]" />
                <button className="h-[10px] flex-1 bg-[#282828] pl-px text-left">Default</button>
              </SurfaceRow>
              {['Subsurface', 'Specular', 'Transmission', 'Coat', 'Sheen', 'Emission'].map((name) => (
                <button key={name} className="flex h-[12px] w-full items-center gap-[4px] pl-[5px]"><Right />{name}</button>
              ))}
            </div>
          </PropPanel>
          <PropPanel title="Volume" />
          <PropPanel title="Displacement" />
          <PropPanel title="Settings" open>
            <div className="pt-[4px] pb-[5px]">
              <CheckBox label="Backface Culling" className="ml-[83px] h-[12px]" />
              <SettingRow label="Blend Mode"><Dropdown label="Blend Mode" value="Opaque" className="flex-1" /></SettingRow>
              <SettingRow label="Shadow Mode"><Dropdown label="Shadow Mode" value="Opaque" className="flex-1" /></SettingRow>
              <SettingRow label="Clip Threshold" dim><NumberField label="Clip Threshold" value="0.000" dim /></SettingRow>
              <CheckBox label="Raytrace Refraction" className="ml-[83px] h-[12px]" />
              <SettingRow label="Refraction Depth"><NumberField label="Refraction Depth" value="0 m" /></SettingRow>
              <CheckBox label="Subsurface Translucency" className="ml-[83px] h-[12px]" />
              <SettingRow label="Pass Index"><NumberField label="Pass Index" value="0" /></SettingRow>
            </div>
          </PropPanel>
        </div>
      </div>
    </div>
  </section>
);

/* ---------- status bar ---------- */

const MouseHint = ({ button, text, className }) => (
  <span className={clsx('flex items-center gap-[4px]', className)}>
    <Svg size={8}>
      <rect x="3" y="1.500" width="10" height="13" rx="3" />
      <path d={button} fill="currentColor" stroke="none" />
    </Svg>
    {text}
  </span>
);

const StatusBar = () => (
  <footer className="flex h-[10px] items-center bg-[#181818] pr-[7px] pl-[4px] text-[#a2a2a2]">
    <MouseHint button="M3 2h5v6H3z" className="w-[117px]" />
    <MouseHint button="M7 2h2v6H7z" text="Pan View" className="w-[117px]" />
    <MouseHint button="M8 2h5v6H8z" text="Region" />
    <span className="ml-auto">4.1.1</span>
  </footer>
);

export default function App() {
  return (
    <div className="flex min-h-screen flex-col bg-black pb-[31px] font-[Roboto,sans-serif] text-[6px] leading-[8px]">
      <TopBar />
      <main className="flex flex-1 gap-px bg-[#181818]">
        <div className="flex min-w-0 flex-1 flex-col">
          <Viewport />
          <Timeline />
        </div>
        <aside className="flex w-[222px] shrink-0 flex-col gap-[2px]">
          <Outliner />
          <Properties />
        </aside>
      </main>
      <StatusBar />
    </div>
  );
}
